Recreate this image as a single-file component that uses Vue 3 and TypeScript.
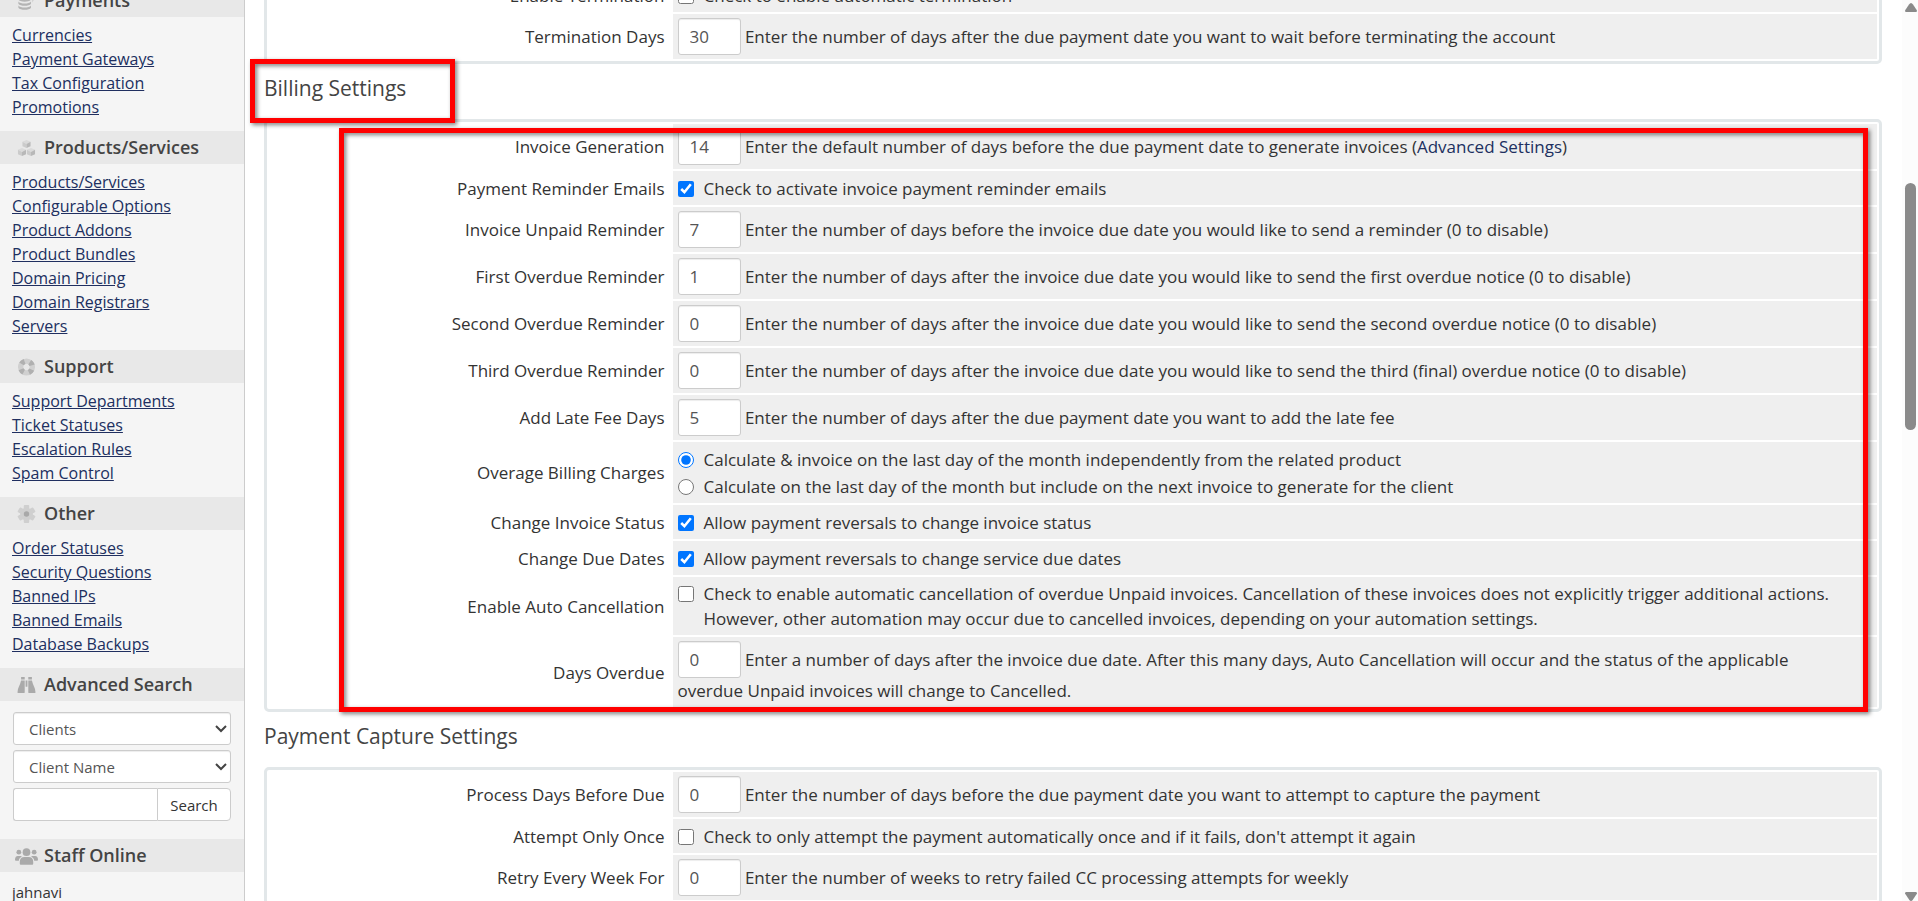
<script setup lang="ts">
import { ref } from 'vue'

interface Row {
  id: string
  label: string
  kind: 'days' | 'check' | 'radio'
  value?: string
  checked?: boolean
  text?: string
  link?: string
  lines?: string[]
}
interface Panel {
  title: string
  marked: boolean
  rows: Row[]
}
interface Menu {
  title: string
  icon: string
  links: string[]
}

const menus: Menu[] = [
  { title: 'Payments', icon: 'coins', links: ['Currencies', 'Payment Gateways', 'Tax Configuration', 'Promotions'] },
  {
    title: 'Products/Services',
    icon: 'cubes',
    links: ['Products/Services', 'Configurable Options', 'Product Addons', 'Product Bundles', 'Domain Pricing', 'Domain Registrars', 'Servers'],
  },
  { title: 'Support', icon: 'ring', links: ['Support Departments', 'Ticket Statuses', 'Escalation Rules', 'Spam Control'] },
  { title: 'Other', icon: 'gear', links: ['Order Statuses', 'Security Questions', 'Banned IPs', 'Banned Emails', 'Database Backups'] },
]

const panels = ref<Panel[]>([
  {
    title: '',
    marked: false,
    rows: [
      { id: 'term', label: 'Enable Termination', kind: 'check', checked: false, lines: ['Check to enable automatic termination'] },
      { id: 'termdays', label: 'Termination Days', kind: 'days', value: '30', text: 'Enter the number of days after the due payment date you want to wait before terminating the account' },
    ],
  },
  {
    title: 'Billing Settings',
    marked: true,
    rows: [
      { id: 'gen', label: 'Invoice Generation', kind: 'days', value: '14', text: 'Enter the default number of days before the due payment date to generate invoices', link: 'Advanced Settings' },
      { id: 'remind', label: 'Payment Reminder Emails', kind: 'check', checked: true, lines: ['Check to activate invoice payment reminder emails'] },
      { id: 'unpaid', label: 'Invoice Unpaid Reminder', kind: 'days', value: '7', text: 'Enter the number of days before the invoice due date you would like to send a reminder (0 to disable)' },
      { id: 'first', label: 'First Overdue Reminder', kind: 'days', value: '1', text: 'Enter the number of days after the invoice due date you would like to send the first overdue notice (0 to disable)' },
      { id: 'second', label: 'Second Overdue Reminder', kind: 'days', value: '0', text: 'Enter the number of days after the invoice due date you would like to send the second overdue notice (0 to disable)' },
      { id: 'third', label: 'Third Overdue Reminder', kind: 'days', value: '0', text: 'Enter the number of days after the invoice due date you would like to send the third (final) overdue notice (0 to disable)' },
      { id: 'late', label: 'Add Late Fee Days', kind: 'days', value: '5', text: 'Enter the number of days after the due payment date you want to add the late fee' },
      {
        id: 'overage',
        label: 'Overage Billing Charges',
        kind: 'radio',
        lines: [
          'Calculate & invoice on the last day of the month independently from the related product',
          'Calculate on the last day of the month but include on the next invoice to generate for the client',
        ],
      },
      { id: 'status', label: 'Change Invoice Status', kind: 'check', checked: true, lines: ['Allow payment reversals to change invoice status'] },
      { id: 'dates', label: 'Change Due Dates', kind: 'check', checked: true, lines: ['Allow payment reversals to change service due dates'] },
      {
        id: 'cancel',
        label: 'Enable Auto Cancellation',
        kind: 'check',
        checked: false,
        lines: [
          'Check to enable automatic cancellation of overdue Unpaid invoices. Cancellation of these invoices does not explicitly trigger additional actions.',
          'However, other automation may occur due to cancelled invoices, depending on your automation settings.',
        ],
      },
      {
        id: 'overdue',
        label: 'Days Overdue',
        kind: 'days',
        value: '0',
        text: 'Enter a number of days after the invoice due date. After this many days, Auto Cancellation will occur and the status of the applicable overdue Unpaid invoices will change to Cancelled.',
      },
    ],
  },
  {
    title: 'Payment Capture Settings',
    marked: false,
    rows: [
      { id: 'process', label: 'Process Days Before Due', kind: 'days', value: '0', text: 'Enter the number of days before the due payment date you want to attempt to capture the payment' },
      { id: 'once', label: 'Attempt Only Once', kind: 'check', checked: false, lines: ["Check to only attempt the payment automatically once and if it fails, don't attempt it again"] },
      { id: 'retry', label: 'Retry Every Week For', kind: 'days', value: '0', text: 'Enter the number of weeks to retry failed CC processing attempts for weekly' },
    ],
  },
])

const overage = ref(0)
const query = ref('')
</script>

<template>
  <div class="page">
    <aside class="sidebar">
      <section v-for="menu in menus" :key="menu.title">
        <h2 class="side-title">
          <svg v-if="menu.icon === 'coins'" class="icon" viewBox="0 0 20 20">
            <g fill="#b4b4b4">
              <ellipse cx="8" cy="4" rx="7" ry="3" />
              <path d="M1 6c2 3 12 3 14 0v2.500c-2 3-12 3-14 0zM1 10.500c2 3 12 3 14 0v2.500c-2 3-12 3-14 0zM1 15c2 3 12 3 14 0v2.500c-2 3-12 3-14 0z" />
            </g>
            <path d="M16 3q3 1 3 5l-3 4z" fill="#d2d2d2" />
          </svg>
          <svg v-else-if="menu.icon === 'cubes'" class="icon" viewBox="0 0 20 20">
            <g fill="#dadada">
              <path d="M10 1l4.500 2L10 5.500 5.500 3zM5 10l4.500 2L5 14.500.500 12zM15 10l4.500 2-4.500 2.500-4.500-2.500z" />
            </g>
            <g fill="#cbcbcb">
              <path d="M5.500 3L10 5.500V10L5.500 8zM.500 12L5 14.500V19L.500 17zM10.500 12l4.500 2.500V19l-4.500-2z" />
            </g>
            <g fill="#b8b8b8">
              <path d="M14.500 3L10 5.500V10l4.500-2zM9.500 12L5 14.500V19l4.500-2zM19.500 12L15 14.500V19l4.500-2z" />
            </g>
          </svg>
          <svg v-else-if="menu.icon === 'ring'" class="icon" viewBox="0 0 20 20">
            <circle cx="10" cy="10" r="6.500" fill="none" stroke="#d0d0d0" stroke-width="6" />
            <circle cx="10" cy="10" r="6.500" fill="none" stroke="#b0b0b0" stroke-width="6" stroke-dasharray="4.200 6.010" stroke-dashoffset="-3" />
          </svg>
          <svg v-else class="icon" viewBox="0 0 20 20">
            <g fill="#cfcfcf">
              <circle cx="10" cy="10" r="7" />
              <rect x="7" y="0" width="6" height="20" rx="1" />
              <rect x="7" y="0" width="6" height="20" rx="1" transform="rotate(60 10 10)" />
              <rect x="7" y="0" width="6" height="20" rx="1" transform="rotate(120 10 10)" />
            </g>
            <circle cx="10" cy="10" r="3" fill="#a8a8a8" />
          </svg>
          <span>{{ menu.title }}</span>
        </h2>
        <ul class="links">
          <li v-for="link in menu.links" :key="link"><a href="#">{{ link }}</a></li>
        </ul>
      </section>

      <section>
        <h2 class="side-title">
          <svg class="icon" viewBox="0 0 20 20" fill="#aaa">
            <path d="M4 1h4v3H4zM12 1h4v3h-4zM4 5h4v13q0 1-1 1H1q-1 0-1-1 0-3 1.500-6T4 5zM16 5h-4v13q0 1 1 1h6q1 0 1-1 0-3-1.500-6T16 5zM9 5h2v7H9z" />
          </svg>
          <span>Advanced Search</span>
        </h2>
        <form class="search" @submit.prevent>
          <div class="drop">
            <select aria-label="Search type"><option>Clients</option></select>
            <svg viewBox="0 0 12 8"><path d="M1 1l5 5 5-5" fill="none" stroke="#444" stroke-width="2" /></svg>
          </div>
          <div class="drop">
            <select aria-label="Search field"><option>Client Name</option></select>
            <svg viewBox="0 0 12 8"><path d="M1 1l5 5 5-5" fill="none" stroke="#444" stroke-width="2" /></svg>
          </div>
          <div class="query">
            <input v-model="query" type="text" aria-label="Search text" />
            <button type="submit">Search</button>
          </div>
        </form>
      </section>

      <section>
        <h2 class="side-title">
          <svg class="icon wide" viewBox="0 0 24 18" fill="#aaa">
            <circle cx="12" cy="5" r="4" />
            <circle cx="4" cy="5" r="2.500" />
            <circle cx="20" cy="5" r="2.500" />
            <path d="M5 17v-2q0-5 5-5h4q5 0 5 5v2q0 1-1 1H6q-1 0-1-1zM0 13q0-4 3-4h3q1 0 1 1-3 1-3 4H1q-1 0-1-1zM24 13q0-4-3-4h-3q-1 0-1 1 3 1 3 4h3q1 0 1-1z" />
          </svg>
          <span>Staff Online</span>
        </h2>
        <p class="staff">jahnavi</p>
      </section>
    </aside>

    <main class="content">
      <template v-for="panel in panels" :key="panel.title">
        <h1 v-if="panel.title" class="panel-title">
          {{ panel.title }}
          <span v-if="panel.marked" class="mark mark-title"></span>
        </h1>
        <div class="panel">
          <table>
            <colgroup>
              <col class="col-label" />
              <col />
            </colgroup>
            <tbody>
              <tr v-for="row in panel.rows" :key="row.id">
                <th scope="row"><label :for="row.id">{{ row.label }}</label></th>
                <td>
                  <template v-if="row.kind === 'days'">
                    <input :id="row.id" v-model="row.value" class="days" type="text" />
                    {{ row.text }}<template v-if="row.link"> (<a href="#">{{ row.link }}</a>)</template>
                  </template>
                  <label v-else-if="row.kind === 'check'" class="choice">
                    <input :id="row.id" v-model="row.checked" type="checkbox" />
                    <span><span v-for="line in row.lines" :key="line" class="line">{{ line }}</span></span>
                  </label>
                  <div v-else class="choices">
                    <label v-for="(line, i) in row.lines" :key="line" class="choice">
                      <input :id="i === 0 ? row.id : undefined" v-model="overage" type="radio" name="overage" :value="i" />
                      <span>{{ line }}</span>
                    </label>
                  </div>
                </td>
              </tr>
            </tbody>
          </table>
          <div v-if="panel.marked" class="mark mark-panel"></div>
        </div>
      </template>
    </main>

    <div class="scrollbar" aria-hidden="true">
      <svg viewBox="0 0 12 9"><path d="M6 0q1 0 2 1.500l4 6q0 1.500-1 1.500H1q-1 0-1-1.500l4-6Q5 0 6 0z" fill="#8a8a8a" /></svg>
      <div class="track"><div class="thumb"></div></div>
      <svg viewBox="0 0 12 9"><path d="M6 9q1 0 2-1.500l4-6Q12 0 11 0H1Q0 0 0 1.500l4 6Q5 9 6 9z" fill="#8a8a8a" /></svg>
    </div>
  </div>
</template>

<style>
body {
  margin: 0;
  background: #fff;
}
</style>

<style scoped>
.page {
  display: grid;
  grid-template-columns: 245px minmax(0, 1fr) 16px;
  height: 100vh;
  overflow: hidden;
  font-family: 'Open Sans', 'Noto Sans', sans-serif;
  font-size: 17px;
  line-height: 25px;
  color: #333;
}
.page * {
  box-sizing: border-box;
}
input,
select,
button {
  font-family: inherit;
}
a {
  color: #202f60;
}
.sidebar {
  min-height: 0;
  margin-top: -16px;
  background: #f5f5f5;
  border-right: 1px solid #ccc;
}
.side-title {
  display: flex;
  align-items: center;
  gap: 8px;
  height: 33px;
  margin: 0;
  padding-left: 17px;
  background: #e8e8e8;
  color: #444;
  font-size: 18px;
  font-weight: 600;
}
.icon {
  width: 19px;
  height: 18px;
}
.icon.wide {
  width: 23px;
  margin: 0 -2px;
}
.links {
  margin: 0;
  padding: 6px 12px 12px;
  list-style: none;
  font-size: 16px;
  line-height: 24px;
}
.search {
  display: grid;
  grid-template-columns: minmax(0, 1fr);
  gap: 5px;
  padding: 11px 13px 18px;
}
.drop {
  position: relative;
}
.drop svg {
  position: absolute;
  right: 4px;
  top: 13px;
  width: 12px;
  height: 8px;
  pointer-events: none;
}
select {
  display: block;
  width: 100%;
  height: 33px;
  padding: 0 15px;
  appearance: none;
  border: 1px solid #ccc;
  border-radius: 3px;
  background: #fff;
  box-shadow: inset 0 1px 1px rgba(0, 0, 0, 0.075);
  color: #555;
  font-size: 15px;
}
.query {
  display: flex;
}
.query input {
  flex: 1;
  min-width: 0;
  height: 33px;
  border: 1px solid #ccc;
  border-right: 0;
  border-radius: 3px 0 0 3px;
  background: #fff;
  font-size: 15px;
}
.query button {
  width: 74px;
  padding: 0;
  border: 1px solid #ccc;
  border-radius: 0 4px 4px 0;
  background: #fff;
  color: #333;
  font-size: 15px;
}
.staff {
  margin: 0;
  padding: 8px 12px;
  font-size: 15px;
}
.content {
  min-height: 0;
  min-width: 0;
  margin-top: -27px;
  padding: 0 20px 0 19px;
}
.panel,
.panel-title {
  position: relative;
}
.panel-title {
  z-index: 1;
  margin: 0;
  padding: 11px 0 18px;
  color: #444;
  font-size: 21px;
  font-weight: 400;
  line-height: 26px;
}
table {
  width: 100%;
  table-layout: fixed;
  border: 3px solid #e2e7e9;
  border-radius: 5px;
  border-spacing: 2px;
}
.col-label {
  width: 25%;
}
th {
  padding: 0 6px 0 0;
  text-align: right;
  font-weight: 400;
}
td {
  height: 34px;
  padding: 4px 24px 4px 5px;
  background: #efefef;
}
td a {
  text-decoration: none;
}
.days {
  width: 63px;
  height: 37px;
  padding: 0 11px;
  border: 1px solid #ccc;
  border-radius: 3px;
  background: #fff;
  box-shadow: inset 0 1px 1px rgba(0, 0, 0, 0.075);
  color: #555;
  font-size: 17px;
}
.choice {
  display: flex;
  gap: 10px;
}
.choice input {
  flex: none;
  width: 16px;
  height: 16px;
  margin: 5px 0 0;
}
.line {
  display: block;
  white-space: nowrap;
}
.choices {
  display: grid;
  gap: 2px;
  padding: 1px 0 0;
}
.mark {
  position: absolute;
  border: 5px solid #f00;
  filter: drop-shadow(2px 2px 2px rgba(0, 0, 0, 0.5));
  pointer-events: none;
}
.mark-title {
  top: -5px;
  bottom: -4px;
  left: -14px;
  width: 205px;
}
.mark-panel {
  z-index: 1;
  top: 9px;
  right: 14px;
  bottom: 0;
  left: 75px;
}
.scrollbar {
  display: flex;
  flex-direction: column;
  align-items: center;
  min-height: 0;
  padding: 3px 0 0 1px;
  background: #fcfcfc;
}
.scrollbar svg {
  flex: none;
  width: 12px;
  height: 9px;
}
.track {
  flex: 1;
  padding-top: 171px;
}
.thumb {
  width: 11px;
  height: 247px;
  border-radius: 6px;
  background: #8a8a8a;
}
</style>
